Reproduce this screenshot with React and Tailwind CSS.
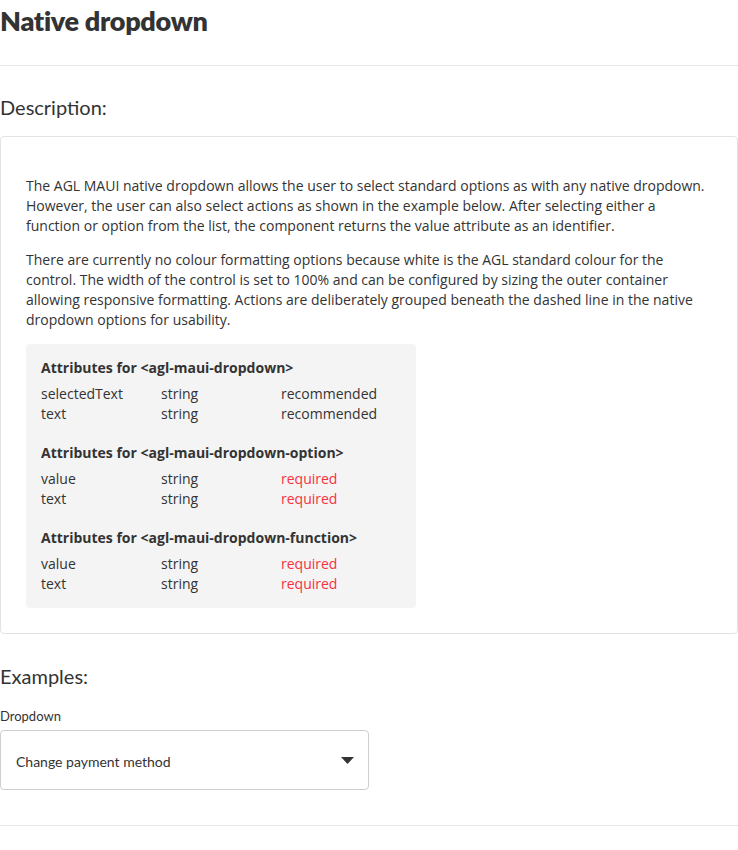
const heading = { fontFamily: 'Lato, "Open Sans", sans-serif' }

const ATTRS = [
  {
    tag: 'agl-maui-dropdown',
    rows: [['selectedText', 'string', 'recommended'], ['text', 'string', 'recommended']],
  },
  {
    tag: 'agl-maui-dropdown-option',
    rows: [['value', 'string', 'required'], ['text', 'string', 'required']],
  },
  {
    tag: 'agl-maui-dropdown-function',
    rows: [['value', 'string', 'required'], ['text', 'string', 'required']],
  },
]

function AttrTable({ tag, rows }) {
  return (
    <div className="mb-[19px] last:mb-0">
      <div className="font-bold text-[14px] leading-[20px] mb-[6px]">Attributes for &lt;{tag}&gt;</div>
      {rows.map(([name, type, req]) => (
        <div key={name} className="grid grid-cols-[120px_120px_1fr] text-[14px] leading-[20px]">
          <span>{name}</span>
          <span>{type}</span>
          <span className={req === 'required' ? 'text-[#f5323f]' : ''}>{req}</span>
        </div>
      ))}
    </div>
  )
}

export default function App() {
  return (
    <div className="w-[738px] bg-white text-[#333] font-['Open_Sans',sans-serif]">
      <h1 className="text-[27px] font-extrabold leading-[42px] tracking-[-0.3px]" style={heading}>Native dropdown</h1>
      <hr className="mt-[23px] border-t border-[#e6e6e6]" />

      <h2 className="text-[20px] font-normal leading-[30px] mt-[26px]" style={heading}>Description:</h2>
      <div className="mt-[14px] border border-[#e3e3e3] rounded-[4px] px-[25px] pt-[39px] pb-[25px]">
        <p className="text-[14px] leading-[20px] mb-[14px]">
          The AGL MAUI native dropdown allows the user to select standard options as with any native dropdown. However, the user can also select actions as shown in the example below. After selecting either a function or option from the list, the component returns the value attribute as an identifier.
        </p>
        <p className="text-[14px] leading-[20px] mb-[14px]">
          There are currently no colour formatting options because white is the AGL standard colour for the control. The width of the control is set to 100% and can be configured by sizing the outer container allowing responsive formatting. Actions are deliberately grouped beneath the dashed line in the native dropdown options for usability.
        </p>
        <div className="w-[390px] bg-[#f4f4f4] rounded-[4px] px-[15px] pt-[14px] pb-[14px]">
          {ATTRS.map((a) => <AttrTable key={a.tag} {...a} />)}
        </div>
      </div>

      <h2 className="text-[20px] font-normal leading-[30px] mt-[27px]" style={heading}>Examples:</h2>
      <div className="text-[13px] leading-[18px] mt-[16px]" style={heading}>Dropdown</div>
      <div className="mt-[5px] w-[369px] h-[60px] border border-[#cfcfcf] rounded-[4px] flex items-center justify-between pl-[15px] pr-[14px]">
        <span className="text-[14px] pt-[3px]" style={heading}>Change payment method</span>
        <svg width="13" height="7" viewBox="0 0 13 7"><path d="M0 0h13L6.5 7z" fill="#333" /></svg>
      </div>
      <hr className="mt-[35px] border-t border-[#e6e6e6]" />
      <div className="h-[24px]" />
    </div>
  )
}
